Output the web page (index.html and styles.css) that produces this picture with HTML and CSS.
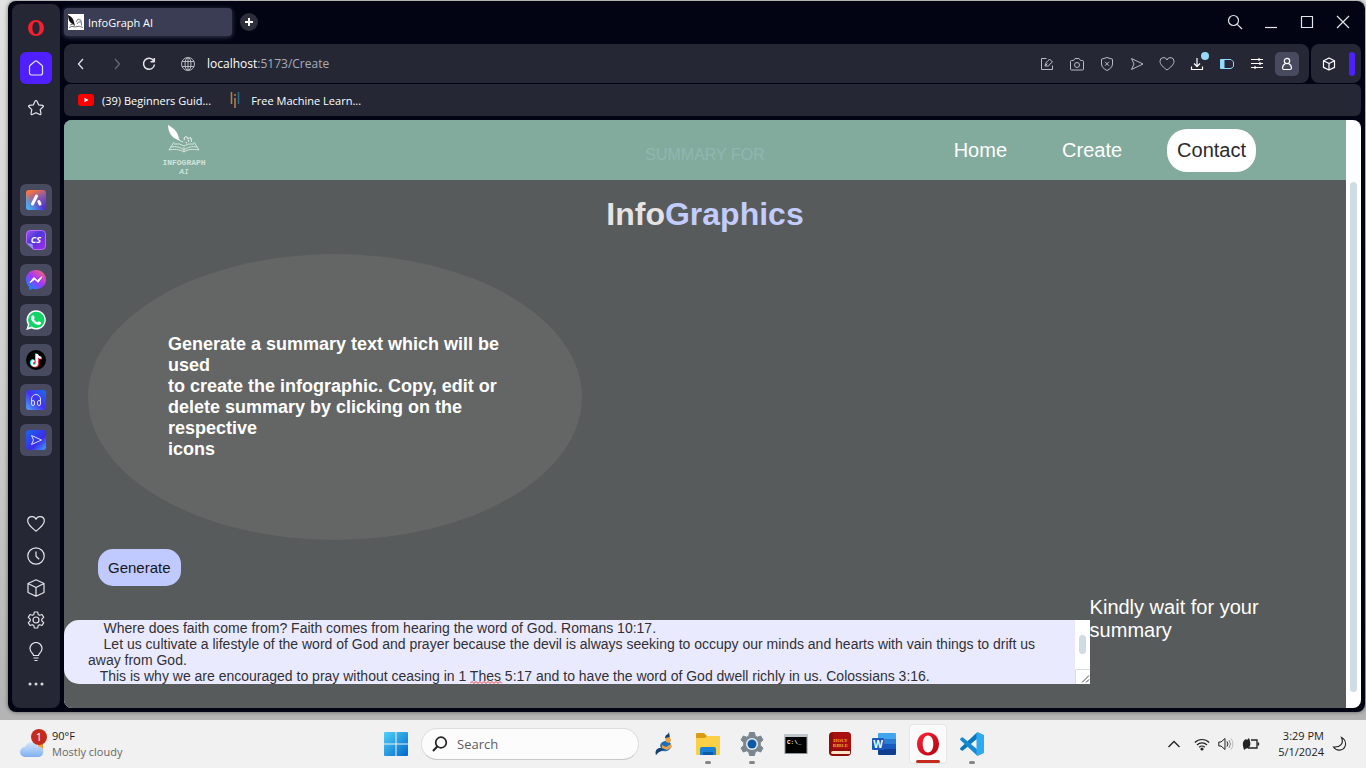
FILE: index.html
```
<!DOCTYPE html>
<html lang="en">
<head>
<meta charset="utf-8">
<meta name="viewport" content="width=device-width, initial-scale=1">
<title>InfoGraph AI</title>
<link rel="stylesheet" href="styles.css">
</head>
<body>
<div class="desktop">
  <div class="window">
    <nav class="sidebar" aria-label="Sidebar">
      <button class="side-btn" aria-label="Opera menu"><svg width="18" height="18" viewBox="0 0 18 18"><path fill="#fa1e2e" fill-rule="evenodd" d="M9 1a8 8 0 1 0 0 16A8 8 0 0 0 9 1zm0 1.800c2.200 0 3.600 2.800 3.600 6.200s-1.400 6.200-3.600 6.200S5.400 12.400 5.400 9 6.800 2.800 9 2.800z"/></svg></button>
      <button class="side-btn home" aria-label="Home"><svg class="line" width="18" height="18" viewBox="0 0 18 18"><path d="M2.500 7.500q0-.6.500-1L8 2.300q1-.8 2 0l5 4.200q.5.400.5 1V14a2 2 0 0 1-2 2h-9a2 2 0 0 1-2-2z"/></svg></button>
      <button class="side-btn" aria-label="Speed dial"><svg class="line" width="18" height="18" viewBox="0 0 18 18"><path d="M9 1.500q.7 0 1 .7l1.600 3.600 4 .5q1.400.4.500 1.500l-2.900 2.800.8 4q0 1.400-1.200.9L9 13.700l-3.800 1.800q-1.200.5-1.200-.9l.8-4L1.900 7.800q-.9-1.100.5-1.500l4-.5L8 2.200q.3-.7 1-.7z"/></svg></button>
      <div class="side-apps">
        <button class="side-btn app" aria-label="Aria"><svg width="20" height="20" viewBox="0 0 20 20"><defs><linearGradient id="ga" x1="0.3" y1="0" x2=".8" y2="1"><stop offset="0" stop-color="#ff7438"/><stop offset=".45" stop-color="#8a5aa8"/><stop offset="1" stop-color="#4c2bd8"/></linearGradient><linearGradient id="gb" x1="0" y1="1" x2=".5" y2=".5"><stop offset="0" stop-color="#3cc9ff"/><stop offset="1" stop-color="#3cc9ff" stop-opacity="0"/></linearGradient></defs><rect width="20" height="20" rx="3" fill="url(#ga)"/><rect width="20" height="20" rx="3" fill="url(#gb)"/><path d="M6.500 14 10.500 6M12.800 11.500l1.200 2.500" stroke="#fff" stroke-width="3" stroke-linecap="round" fill="none"/></svg></button>
        <button class="side-btn app" aria-label="ChatSonic"><svg width="20" height="20" viewBox="0 0 20 20"><defs><linearGradient id="gc" x1="0" y1="0" x2="1" y2="1"><stop offset="0" stop-color="#a353f4"/><stop offset=".4" stop-color="#4b38d8"/><stop offset="1" stop-color="#a42ce6"/></linearGradient></defs><path d="M4 .5h12a3.500 3.500 0 0 1 3.500 3.500v12a3.500 3.500 0 0 1-3.500 3.500H7.500L.5 13V4A3.500 3.500 0 0 1 4 .5z" fill="url(#gc)" stroke="#bc69f5"/><path d="M.5 13 7.500 19.500 6.500 14z" fill="#9b8cff"/><text x="10" y="13" text-anchor="middle" class="cs">CS</text></svg></button>
        <button class="side-btn app" aria-label="Messenger"><svg width="20" height="20" viewBox="0 0 20 20"><defs><linearGradient id="gd" x1=".1" y1="1" x2=".9" y2="0"><stop offset="0" stop-color="#0094ff"/><stop offset=".5" stop-color="#a034fb"/><stop offset="1" stop-color="#ff6670"/></linearGradient></defs><path d="M10 0C4.300 0 0 4.100 0 9.600c0 2.900 1.200 5.400 3.100 7.100L3.200 20l3.400-1.300c1 .3 2.200.5 3.400.5 5.700 0 10-4.100 10-9.600S15.700 0 10 0z" fill="url(#gd)"/><path d="m4 12.500 3.800-5 3.500 3L16 6.800l-3.800 5.500-3.500-3z" fill="#fff" stroke="#fff"/></svg></button>
        <button class="side-btn app" aria-label="WhatsApp"><svg width="20" height="20" viewBox="0 0 20 20"><path d="M10.200.2a9.600 9.600 0 0 0-8.300 14.500L.2 20l5.400-1.500A9.700 9.700 0 1 0 10.200.2z" fill="#fff"/><path d="M10.200 1.800a8.100 8.100 0 0 0-6.800 12.400l-1 3.400 3.400-1A8.100 8.100 0 1 0 10.200 1.800z" fill="#12d366"/><path d="M6.500 5.500c.6-.4 1.200-.1 1.400.4l.7 1.700c.2.600-.8 1.200-.6 1.700.7 1.300 1.900 2.400 3.300 2.900.5.100 1-1.200 1.500-1l2 1c.4.200.3 1.300-.2 1.900-1.200 1.400-3.800 1-6.100-.6-2.200-1.600-3.900-4.200-3.400-6.200.2-.9.700-1.300 1.400-1.800z" fill="#fff"/></svg></button>
        <button class="side-btn app" aria-label="TikTok"><svg width="20" height="20" viewBox="0 0 20 20"><circle cx="10" cy="10" r="10" fill="#020202"/><g fill="none" stroke-width="2"><path stroke="#25f4ee" d="M10 3.500v9a2.500 2.500 0 1 1-2.500-2.500M10.500 4.500q.8 2.800 4 3"/><path stroke="#fe2c55" d="M12 5v9a2.500 2.500 0 1 1-2.500-2.500M12 5.500q.8 2.800 4 3"/><path stroke="#fff" d="M11 4v9.200a2.500 2.500 0 1 1-2.500-2.500M11 4.500q.8 3 4.300 3.300"/></g></svg></button>
        <button class="side-btn app" aria-label="Player"><svg width="20" height="20" viewBox="0 0 20 20"><defs><linearGradient id="ge" x1="0" y1="1" x2="1" y2="0"><stop offset="0" stop-color="#50a8ff"/><stop offset=".5" stop-color="#4330f0"/><stop offset="1" stop-color="#1b6dee"/></linearGradient></defs><rect width="20" height="20" rx="3" fill="url(#ge)"/><g fill="none" stroke="#dadcff"><path d="M5.500 12V9a4.500 4.500 0 0 1 9 0v3"/><rect x="5.500" y="10.500" width="3" height="5" rx="1.500"/><rect x="11.500" y="10.500" width="3" height="5" rx="1.500"/></g></svg></button>
        <button class="side-btn app" aria-label="My Flow"><svg width="20" height="20" viewBox="0 0 20 20"><defs><linearGradient id="gf" x1="0" y1="0" x2="1" y2="1"><stop offset="0" stop-color="#1c65ef"/><stop offset=".6" stop-color="#3a2bea"/><stop offset="1" stop-color="#46a0ff"/></linearGradient></defs><rect width="20" height="20" rx="3" fill="url(#gf)"/><path d="M5.500 5.500 15.500 10l-10 4.500 2-4.500z" fill="none" stroke="#dadcff" stroke-linejoin="round"/></svg></button>
      </div>
      <div class="side-tools">
        <button class="side-btn" aria-label="Favourites"><svg class="line" width="18" height="18" viewBox="0 0 18 18"><path d="M9 16.200C5 13 .7 9.600.7 6A4.300 4.300 0 0 1 9 4.300 4.300 4.300 0 0 1 17.300 6c0 3.600-4.300 7-8.300 10.200z"/></svg></button>
        <button class="side-btn" aria-label="History"><svg class="line" width="18" height="18" viewBox="0 0 18 18"><circle cx="9" cy="9" r="8.200"/><path d="M9 4.500v4.800l3.200 3"/></svg></button>
        <button class="side-btn" aria-label="Extensions"><svg class="line" width="18" height="18" viewBox="0 0 18 18"><path d="m9 .8 8 3.700v9L9 17.200l-8-3.700v-9zM1 4.500l8 4 8-4M9 8.500v8.700"/></svg></button>
        <button class="side-btn" aria-label="Settings"><svg class="line" width="18" height="18" viewBox="0 0 18 18"><path d="M7.300 1h3.400l.5 2.500 1.400.8 2.400-.8 1.700 2.900-1.900 1.700v1.800l1.900 1.700-1.700 2.900-2.400-.8-1.400.8-.5 2.500H7.300l-.5-2.500-1.400-.8-2.400.8-1.700-2.900 1.900-1.700V8.100L1.300 6.400 3 3.500l2.400.8 1.400-.8z"/><circle cx="9" cy="9" r="3"/></svg></button>
        <button class="side-btn" aria-label="Tips"><svg class="line" width="18" height="20" viewBox="0 0 18 20"><path d="M6.500 13.500c0-2-3.500-3.200-3.500-7a6 6 0 0 1 12 0c0 3.800-3.500 5-3.500 7zM6.500 16h5M7.500 18.500h3"/></svg></button>
        <button class="side-btn" aria-label="More"><svg width="18" height="18" viewBox="0 0 18 18" fill="#d9dae0"><circle cx="3" cy="9" r="1.500"/><circle cx="9" cy="9" r="1.500"/><circle cx="15" cy="9" r="1.500"/></svg></button>
      </div>
    </nav>

    <div class="browser">
      <div class="tabs">
        <button class="tab"><svg width="16" height="16" viewBox="0 0 16 16"><rect width="16" height="16" fill="#fff"/><path d="M0 1q5 2 6 7l1 4-4-3Q0 6 0 1z" fill="#111"/><path d="M1 13.500q3-2 6-.5 4-2 8 .5M2 11q3-2 5 .500M13.500 11.500q0-4-1-6M8 8l2-3 2 1M9 10q1-3 4-2" stroke="#777" fill="none"/></svg>InfoGraph AI</button>
        <button class="new-tab" aria-label="New tab"><svg width="18" height="18" viewBox="0 0 18 18"><circle cx="9" cy="9" r="9" fill="#2c2e39"/><path d="M9 5v8M5 9h8" stroke="#fff" stroke-width="2"/></svg></button>
        <div class="window-controls">
          <button aria-label="Search tabs"><svg class="line" width="16" height="16" viewBox="0 0 16 16"><circle cx="6.500" cy="6.500" r="5"/><path d="m10.300 10.300 4.700 4.700"/></svg></button>
          <button aria-label="Minimize"><svg class="line" width="16" height="16" viewBox="0 0 16 16"><path d="M2 13.500h12"/></svg></button>
          <button aria-label="Maximize"><svg class="line" width="16" height="16" viewBox="0 0 16 16"><path d="M2.500 2.500h11v11h-11z"/></svg></button>
          <button aria-label="Close"><svg class="line" width="16" height="16" viewBox="0 0 16 16"><path d="m2 2 12 12M14 2 2 14"/></svg></button>
        </div>
      </div>

      <div class="toolbar">
        <div class="address">
          <button class="nav-btn" aria-label="Back"><svg class="line" width="16" height="16" viewBox="0 0 16 16"><path d="M10 3 5.500 8l4.500 5"/></svg></button>
          <button class="nav-btn dim" aria-label="Forward"><svg class="line" width="16" height="16" viewBox="0 0 16 16"><path d="m6 3 4.500 5L6 13"/></svg></button>
          <button class="nav-btn" aria-label="Reload"><svg class="line" width="16" height="16" viewBox="0 0 16 16"><path stroke-width="1.500" d="M12.800 5A5.500 5.500 0 1 0 13.500 8.500M13.300 2v3.800H9.500"/></svg></button>
          <svg class="line soft globe" width="16" height="16" viewBox="0 0 16 16"><circle cx="8" cy="8" r="6.500"/><ellipse cx="8" cy="8" rx="3" ry="6.500"/><path d="M2 5.500h12M2 10.500h12M8 1.500v13"/></svg>
          <span class="url"><span class="host">localhost</span>:5173/Create</span>
          <div class="actions">
            <button aria-label="Edit page"><svg class="line soft" width="16" height="16" viewBox="0 0 16 16"><path d="M7.500 2.500h-5v11h11V9.500M6 10l1-3.500 1.500-1L10.500 3l3 3L11 8l-1.500 2zM6 10l2.500-2.500"/></svg></button>
            <button aria-label="Snapshot"><svg class="line soft" width="16" height="16" viewBox="0 0 16 16"><path d="M4.500 4.500 6 2.500h4l1.500 2h2a1 1 0 0 1 1 1V13a1 1 0 0 1-1 1h-11a1 1 0 0 1-1-1V5.500a1 1 0 0 1 1-1z"/><circle cx="8" cy="9" r="2.500"/></svg></button>
            <button aria-label="Blocker"><svg class="line soft" width="16" height="16" viewBox="0 0 16 16"><path d="m8 1.500 5.500 1.700V8c0 3-2.500 5-5.500 6.500C5 13 2.500 11 2.500 8V3.200zM6 5.800l4 4M10 5.800l-4 4"/></svg></button>
            <button aria-label="Send"><svg class="line soft" width="16" height="16" viewBox="0 0 16 16"><path d="M2.500 2.500 14 8 2.500 13.500 5 8z"/></svg></button>
            <button aria-label="Add to favourites"><svg class="line soft" width="16" height="16" viewBox="0 0 16 16"><path d="M8 14C4.500 11.500 1 8.500 1 5.300A3.600 3.600 0 0 1 8 4a3.600 3.600 0 0 1 7 1.300C15 8.500 11.500 11.500 8 14z"/></svg></button>
            <button class="has-dot" aria-label="Downloads"><svg class="line bright" width="16" height="16" viewBox="0 0 16 16"><path d="M8 2v8.500M5 7.500l3 3 3-3M2.500 10.500v3h11v-3"/></svg></button>
            <button aria-label="Battery saver"><svg width="16" height="16" viewBox="0 0 16 16" fill="none" stroke="#94d8fc"><path d="M1.500 3.500h10.500l2.500 2.500v4.500L12 12.500H1.500z"/><path fill="#94d8fc" d="M2 4h3v8H2z"/></svg></button>
            <button aria-label="Easy setup"><svg class="line bright" width="16" height="16" viewBox="0 0 16 16"><path d="M2 3.500h12M2 7.500h12M2 11.500h12M10 2v3M6 10v3M11 6v3"/></svg></button>
            <button class="profile" aria-label="Profile"><svg class="line bright" width="16" height="16" viewBox="0 0 16 16"><circle cx="8" cy="5" r="2.700"/><path d="M6.500 7.500c-2 1-3 2.500-3 4.500q0 1.500 1.500 1.500h6q1.500 0 1.500-1.500c0-2-1-3.500-3-4.500"/></svg></button>
          </div>
        </div>
        <div class="extension">
          <button aria-label="Extensions"><svg class="line bright" width="16" height="16" viewBox="0 0 16 16"><path d="m8 2 5.500 2.800v6.600L8 14l-5.500-2.600V4.800zM2.500 4.800 8 7.500l5.500-2.700M8 7.500V14"/></svg></button>
          <span class="accent"></span>
        </div>
      </div>

      <div class="bookmarks">
        <a href="#" class="bookmark"><svg width="16" height="12" viewBox="0 0 16 12"><rect width="16" height="12" rx="3" fill="#f00"/><path d="m6.500 3.700 4 2.300-4 2.300z" fill="#fff"/></svg>(39) Beginners Guid...</a>
        <a href="#" class="bookmark"><svg width="16" height="16" viewBox="0 0 16 16" fill="none" stroke-width="1.500"><path stroke="#b98242" d="M4.500 0v12M8 6v10M8 2v2"/><path stroke="#2a6d8a" d="M11.500 0v12"/></svg>Free Machine Learn...</a>
      </div>

      <div class="viewport">
        <div class="page">
          <header class="site-header">
            <div class="logo" role="img" aria-label="InfoGraph AI">
              <svg width="34" height="30" viewBox="0 0 34 30" fill="none" stroke="#d5e7df"><path fill="#fff" stroke="none" d="M1 1c6 3 10 7 11 14l3 3-4-2C5 14 1 8 1 1z"/><path d="M7 18 2 26c5-1 10-1 15 2 4-3 9-3 15-2l-5-8M17 28v-5M4 23c5-1 9 0 13 3 4-3 8-4 13-3M7 20q6-1 10 2 4-3 10-2"/><path stroke-dasharray="1 2" stroke-width="2" d="M15 18l4-5 6 3M19 19l5-5M17 14h8M21 17h6"/></svg>
              <span class="logo-name">INFOGRAPH</span>
              <span class="logo-sub">AI</span>
            </div>
            <p class="summary-for">SUMMARY FOR</p>
            <nav class="site-nav">
              <a href="#">Home</a>
              <a href="#">Create</a>
              <a href="#" class="contact">Contact</a>
            </nav>
          </header>
          <main class="content">
            <h1 class="title">Info<span>Graphics</span></h1>
            <h2 class="intro">Generate a summary text which will be used<br>to create the infographic. Copy, edit or delete summary by clicking on the respective<br>icons</h2>
            <button class="generate">Generate</button>
            <div class="summary-row">
              <div class="editor">
                <textarea aria-label="Summary text" spellcheck="false">    Where does faith come from? Faith comes from hearing the word of God. Romans 10:17.
    Let us cultivate a lifestyle of the word of God and prayer because the devil is always seeking to occupy our minds and hearts with vain things to drift us away from God.
   This is why we are encouraged to pray without ceasing in 1 Thes 5:17 and to have the word of God dwell richly in us. Colossians 3:16.</textarea>
                <svg class="squiggle" width="32" height="3" viewBox="0 0 32 3"><path d="M0 2.500 2 .5l2 2 2-2 2 2 2-2 2 2 2-2 2 2 2-2 2 2 2-2 2 2 2-2 2 2 2-2 2 2" fill="none" stroke="#f03a3a"/></svg>
                <div class="editor-track">
                  <span class="editor-thumb"></span>
                  <svg class="grip" width="15" height="15" viewBox="0 0 15 15"><path d="M.5 15V.5H15" fill="none" stroke="#dcdcdc"/><path d="m7 13.500 7-7M11 13.500l3-3" stroke="#444" fill="none"/></svg>
                </div>
              </div>
              <p class="wait">Kindly wait for your summary</p>
            </div>
          </main>
        </div>
        <div class="scroll-track"><span class="scroll-thumb"></span></div>
      </div>
    </div>
  </div>

  <footer class="taskbar">
    <button class="weather">
      <svg width="28" height="30" viewBox="0 0 28 30"><defs><linearGradient id="gw" x1="0" y1="0" x2="0" y2="1"><stop offset="0" stop-color="#d3e5ff"/><stop offset="1" stop-color="#7fb0f0"/></linearGradient></defs><path fill="#f39a30" d="M18 15h5v5h-5z"/><path d="M5 28a5 5 0 0 1 0-10 7 7 0 0 1 13-.5A5.300 5.300 0 0 1 19 28z" fill="url(#gw)"/><circle cx="19" cy="8" r="8" fill="#c42b1c"/><text x="19" y="12" text-anchor="middle" class="badge">1</text></svg>
      <span class="weather-text"><span>90°F</span><span class="muted">Mostly cloudy</span></span>
    </button>
    <div class="dock">
      <button class="task" aria-label="Start"><svg width="24" height="24" viewBox="0 0 24 24"><defs><linearGradient id="gs" x1="0" y1="0" x2="1" y2="1"><stop offset="0" stop-color="#4fd1fa"/><stop offset="1" stop-color="#0067c8"/></linearGradient></defs><path fill="url(#gs)" d="M1 0h10.500v11.500H0V1a1 1 0 0 1 1-1zM12.500 0H23a1 1 0 0 1 1 1v10.500H12.500zM0 12.500h11.500V24H1a1 1 0 0 1-1-1zM12.500 12.500H24V23a1 1 0 0 1-1 1H12.500z"/></svg></button>
      <label class="search"><svg width="16" height="16" viewBox="0 0 16 16" fill="none" stroke="#222" stroke-width="1.700"><circle cx="9" cy="6.500" r="5.300"/><path stroke-width="2" d="M5.300 10.500 1 15"/></svg><input type="text" placeholder="Search" aria-label="Search"></label>
      <button class="task" aria-label="Genie"><svg width="24" height="24" viewBox="0 0 24 24"><path fill="#1f6fb4" d="M4 23c-1-5 1-7 5-7-2-3 0-6 4-7 4 0 7 2 6 6-1 3-4 5-8 4-3 0-5 1-7 4z"/><path fill="#173f70" d="M4 23c-1-5 1-7 5-7l4 2c-4 0-7 2-9 5zM13 6q0-3 3-4l1-2 1 6z"/><path fill="#e9a14a" d="m13 6 5-1 1 4-2 2-3-1zM10 13l4 2 5-3 1 3-5 3-5-2z"/></svg></button>
      <button class="task running" aria-label="File Explorer"><svg width="24" height="24" viewBox="0 0 24 24"><path fill="#d99b12" d="M0 2a1 1 0 0 1 1-1h7l3 3h12v6H0z"/><path fill="#fbcf46" d="M0 6h9l2-2h12a1 1 0 0 1 1 1v17a1 1 0 0 1-1 1H1a1 1 0 0 1-1-1z"/><path fill="#1881d6" d="M4 23v-6a2 2 0 0 1 2-2h12a2 2 0 0 1 2 2v6z"/><path fill="#0b5ca7" d="M7 20h10v3H7z"/></svg></button>
      <button class="task running" aria-label="Settings"><svg width="24" height="24" viewBox="0 0 24 24"><path fill="#7c868f" stroke="#7c868f" stroke-linejoin="round" d="M9.500.5h5l.7 3.500 2.100 1.200 3.400-1.200 2.300 4-2.700 2.400v3.200l2.700 2.400-2.300 4-3.400-1.200-2.100 1.200-.7 3.500h-5L8.800 20l-2.100-1.200L3.300 20 1 16l2.700-2.400v-3.200L1 8l2.300-4 3.400 1.200L8.800 4z"/><circle cx="12" cy="12" r="6" fill="#e9eef2"/><circle cx="12" cy="12" r="4.500" fill="#0c59a5"/></svg></button>
      <button class="task" aria-label="Command Prompt"><svg width="24" height="24" viewBox="0 0 24 24"><rect x="1" y="2.500" width="22" height="19" fill="#000" stroke="#8c9298"/><path fill="#bfc5ca" d="M1 2h22v3H1z"/><text x="3" y="12" class="cmd">C:\_</text></svg></button>
      <button class="task" aria-label="Holy Bible"><svg width="24" height="24" viewBox="0 0 24 24"><rect x="1" width="22" height="24" rx="4" fill="#8f0c0c"/><path fill="#b91310" d="M5 0h14a4 4 0 0 1 4 4v13H5z" opacity=".6"/><path fill="#f6e6c5" d="M3 21q0-2 2-2h17v3H5q-2 0-2-1z"/><text x="12.500" y="10" text-anchor="middle" class="bible">HOLY</text><text x="12.500" y="15" text-anchor="middle" class="bible">BIBLE</text></svg></button>
      <button class="task" aria-label="Word"><svg width="24" height="24" viewBox="0 0 24 24"><path fill="#41a5ee" d="M7 1h16a1 1 0 0 1 1 1v5H6V2a1 1 0 0 1 1-1z"/><path fill="#2b7cd3" d="M6 7h18v5H6z"/><path fill="#185abd" d="M6 12h18v5H6z"/><path fill="#103f91" d="M6 17h18v5a1 1 0 0 1-1 1H7a1 1 0 0 1-1-1z"/><rect y="6" width="12" height="12" rx="1" fill="#185abd"/><text x="6" y="15.500" text-anchor="middle" class="word">W</text></svg></button>
      <button class="task active" aria-label="Opera"><svg width="24" height="24" viewBox="0 0 24 24"><defs><linearGradient id="go" x1="0" y1="0" x2="1" y2="1"><stop offset="0" stop-color="#ff2637"/><stop offset="1" stop-color="#b0000d"/></linearGradient></defs><path fill="url(#go)" fill-rule="evenodd" d="M12 .5C5.500.5 1 5.500 1 12s4.500 11.500 11 11.500S23 18.500 23 12 18.500.5 12 .5zm0 3c3.500 0 5.300 3.800 5.300 8.500s-1.800 8.500-5.300 8.500S6.700 16.700 6.700 12 8.500 3.500 12 3.500z"/></svg></button>
      <button class="task running" aria-label="Visual Studio Code"><svg width="24" height="24" viewBox="0 0 24 24"><path fill="#0878be" d="M17.500 0 18 6 3 18.500q-.7.500-1.300 0L.3 17.200q-.5-.6 0-1.200z"/><path fill="#1689d3" d="M17.500 24 18 18 3 5.500q-.7-.5-1.300 0L.3 6.800q-.5.600 0 1.200z"/><path fill="#2fa9f2" d="M17.500 0 24 3v18l-6.500 3-1-1.500V1.500z"/></svg></button>
    </div>
    <div class="tray">
      <button class="tray-btn chevron" aria-label="Show hidden icons"><svg width="16" height="16" viewBox="0 0 16 16"><path d="m2.500 11 5.500-5.500 5.500 5.500" fill="none" stroke="#222" stroke-width="1.300"/></svg></button>
      <button class="tray-btn" aria-label="Network, volume and battery">
        <svg width="16" height="16" viewBox="0 0 16 16" fill="none" stroke="#222" stroke-width="1.200"><path d="M.8 6.500a10.200 10.200 0 0 1 14.400 0M3 9a7 7 0 0 1 10 0M5.200 11.300a4 4 0 0 1 5.600 0"/><circle cx="8" cy="13" r="1" fill="#222"/></svg>
        <svg width="16" height="16" viewBox="0 0 16 16" fill="none" stroke="#222"><path d="M.8 6H3l4-3.500v11L3 10H.8zM9 5.500q1.800 2.500 0 5"/><path d="M11 4q3 4 0 8" stroke="#888"/><path d="M13 2.500q4 5.500 0 11" stroke="#bbb"/></svg>
        <svg width="18" height="16" viewBox="0 0 18 16" fill="none" stroke="#222" stroke-width="1.300"><path d="M9 4h6v8H6M16.500 6.500v3"/><path fill="#222" stroke="none" d="M1 10Q0 5 4 3l1 1 2-2q2 5 1 8-2 3-4 2.500L2 14z"/></svg>
      </button>
      <button class="clock"><span>3:29 PM</span><span>5/1/2024</span></button>
      <button class="tray-btn" aria-label="Notifications"><svg width="16" height="16" viewBox="0 0 16 16"><path d="M9.500 1.500c2.500 6-1 10-8 9.500 3 4.500 9.500 4 11.500-.5 1.500-4-.5-7.500-3.500-9z" fill="none" stroke="#222" stroke-width="1.100"/></svg></button>
    </div>
  </footer>
</div>
</body>
</html>
```
FILE: styles.css
```
* { box-sizing: border-box; }

body {
  margin: 0;
  font-family: "Open Sans", "Noto Sans", sans-serif;
  font-size: 12px;
}

button {
  margin: 0;
  padding: 0;
  border: 0;
  background: none;
  color: inherit;
  font: inherit;
  display: flex;
  align-items: center;
  justify-content: center;
}

a { color: inherit; text-decoration: none; }

svg { flex: none; display: block; }

.line {
  fill: none;
  stroke: #e4e5ea;
  stroke-width: 1.2;
  stroke-linejoin: round;
}
.line.soft { stroke: #b9bbc2; stroke-width: 1; }
.line.bright { stroke: #fff; }

.desktop {
  min-height: 100vh;
  display: flex;
  flex-direction: column;
  background: linear-gradient(#e2e2e2, #cfcfcf 50%, #b0b0b0);
}

/* Browser window */
.window {
  flex: 1;
  display: flex;
  gap: 4px;
  margin: 1px 1px 8px 8px;
  padding: 3px 4px 4px;
  background: #020414;
  border-radius: 8px;
  box-shadow: 0 0 4px rgba(0, 0, 0, 0.5);
}

.sidebar {
  width: 48px;
  flex: none;
  display: flex;
  flex-direction: column;
  align-items: center;
  gap: 8px;
  padding: 8px 0;
  background: #252834;
  border-radius: 8px;
}
.side-btn { width: 32px; height: 32px; border-radius: 6px; }
.side-btn.home { background: #4f1fff; }
.side-btn.app { background: #484a60; }
.side-apps { display: grid; gap: 8px; margin-top: 52px; }
.side-tools { display: grid; margin-top: auto; }
.cs { font: italic bold 9px "Open Sans", sans-serif; fill: #fff; }

.browser {
  flex: 1;
  min-width: 0;
  display: flex;
  flex-direction: column;
}

.tabs {
  display: flex;
  align-items: center;
  height: 36px;
  margin-bottom: 4px;
  color: #fff;
}
.tab {
  width: 168px;
  height: 28px;
  justify-content: flex-start;
  gap: 4px;
  padding: 0 4px;
  background: #3b3d54;
  border-radius: 4px;
  box-shadow: 0 1px 5px #3b3d54;
  font-size: 11px;
}
.new-tab { margin-left: 8px; }
.window-controls { display: flex; margin-left: auto; }
.window-controls button { width: 36px; height: 36px; }

.toolbar { display: flex; gap: 2px; height: 39px; }
.address, .extension {
  display: flex;
  align-items: center;
  background: #252834;
  border-radius: 8px;
}
.address { flex: 1; min-width: 0; padding: 0 7px 0 1px; }
.nav-btn { width: 32px; height: 32px; }
.nav-btn.dim { margin-left: 4px; opacity: 0.35; }
.globe { margin: 0 11px 0 15px; }
.url { color: #a9acb8; }
.host { color: #fff; }
.actions { display: flex; align-items: center; margin-left: auto; }
.actions button { width: 24px; height: 24px; margin: 0 3px; }
.actions .profile { background: #484a60; border-radius: 5px; }
.has-dot { position: relative; }
.has-dot::after {
  content: "";
  position: absolute;
  top: 0;
  right: 0;
  width: 8px;
  height: 8px;
  border-radius: 50%;
  background: #94d8fc;
}
.extension { width: 50px; justify-content: space-between; padding: 0 6px 0 10px; }
.accent { width: 6px; height: 24px; border-radius: 3px; background: #4f1fff; }

.bookmarks {
  display: flex;
  align-items: center;
  gap: 16px;
  height: 32px;
  margin: 1px 0 4px;
  padding: 0 14px;
  background: #252834;
  border-radius: 6px;
  color: #fff;
  font-size: 11px;
}
.bookmark { display: flex; align-items: center; gap: 8px; }

/* Web page */
.viewport {
  flex: 1;
  display: flex;
  border-radius: 8px;
  overflow: hidden;
  background: #fff;
  font-family: "Liberation Sans", Arial, sans-serif;
}
.page { flex: 1; min-width: 0; background: #575b5b; }
.scroll-track { width: 15px; display: flex; padding: 62px 4px 16px; }
.scroll-thumb { flex: 1; border-radius: 4px; background: #d0dce4; }

.site-header {
  display: grid;
  grid-template-columns: 1fr auto 1fr;
  align-items: center;
  height: 60px;
  padding: 0 90px;
  background: #83ab9d;
  color: #fff;
}
.logo {
  width: 48px;
  margin-left: 6px;
  display: flex;
  flex-direction: column;
  align-items: center;
}
.logo-name { margin-top: 4px; font: bold 8px/9px "Liberation Mono", monospace; color: #d0e2da; }
.logo-sub { font: italic 8px/10px "Liberation Mono", monospace; color: #dfece6; }
.summary-for { margin: 10px 0 0; font-size: 16px; line-height: 18px; color: #8fb7b0; }
.site-nav {
  display: flex;
  justify-content: flex-end;
  gap: 35px;
  font-size: 20px;
  line-height: 23px;
}
.site-nav a { padding: 10px; }
.site-nav .contact { background: #fff; color: #2a2a2e; border-radius: 20px; }

.content { padding-top: 16px; }
.title {
  margin: 0;
  text-align: center;
  font-size: 32px;
  line-height: 36px;
  color: #e8e3e3;
}
.title span { color: #c2ccff; }
.intro {
  width: 494px;
  max-width: 100%;
  margin: 22px 0 9px 24px;
  padding: 80px;
  border-radius: 50%;
  background: #636664;
  color: #fff;
  font-size: 18px;
  line-height: 21px;
}
.generate {
  margin-left: 34px;
  padding: 10px;
  border-radius: 15px;
  background: #c0caff;
  color: #16161d;
  font-size: 15px;
  line-height: 17px;
}
.summary-row {
  display: flex;
  align-items: flex-start;
  padding: 10px 0 24px;
}
.editor {
  position: relative;
  width: 80%;
  height: 64px;
  margin-top: 24px;
  display: flex;
}
.editor textarea {
  flex: 1;
  min-width: 0;
  margin: 0;
  padding: 0 24px;
  border: 0;
  border-radius: 15px 0 0 15px;
  background: #eaeaff;
  color: #303036;
  font: 14px/16px "Liberation Sans", Arial, sans-serif;
  resize: none;
  overflow: hidden;
}
.squiggle { position: absolute; left: 406px; bottom: 0; }
.editor-track {
  width: 15px;
  display: flex;
  flex-direction: column;
  justify-content: space-between;
  align-items: center;
  padding-top: 15px;
  background: #fff;
}
.editor-thumb { width: 7px; height: 19px; border-radius: 4px; background: #d0dce4; }
.wait {
  flex: 1;
  margin: 0;
  padding-right: 24px;
  color: #fff;
  font-size: 20px;
  line-height: 23px;
}

/* Taskbar */
.taskbar {
  display: grid;
  grid-template-columns: 1fr auto 1fr;
  align-items: center;
  height: 48px;
  padding: 0 18px 0 20px;
  background: #f1f1f1;
  color: #1c1c1c;
  font-size: 11px;
  line-height: 16px;
}
.weather { justify-self: start; gap: 4px; }
.weather-text { display: grid; text-align: left; }
.muted { color: #666; }
.badge { font: 11px "Open Sans", sans-serif; fill: #fff; }
.dock { display: flex; align-items: center; }
.task { position: relative; width: 44px; height: 40px; }
.task.running::after,
.task.active::after {
  content: "";
  position: absolute;
  bottom: 0;
  left: 19px;
  width: 6px;
  height: 3px;
  border-radius: 2px;
  background: #868686;
}
.task.active {
  border: 1px solid #e6e6e6;
  border-radius: 4px;
  background: #fafafa;
  width: 38px;
  margin: 0 3px;
}
.task.active::after { left: 6px; width: 24px; background: #c42b1c; }
.search {
  display: flex;
  align-items: center;
  gap: 9px;
  width: 218px;
  height: 32px;
  margin: 0 3px;
  padding: 0 10px;
  border: 1px solid #dedede;
  border-bottom-color: #c8c8c8;
  border-radius: 16px;
  background: #fcfcfc;
}
.search input {
  flex: 1;
  min-width: 0;
  padding: 0;
  border: 0;
  background: none;
  font: 13px "Open Sans", sans-serif;
}
.search input::placeholder { color: #5c5c5c; }
.cmd { font: bold 6px "Liberation Mono", monospace; fill: #fff; }
.bible { font: bold 5px "Liberation Serif", serif; fill: #f0a830; }
.word { font: bold 10px "Open Sans", sans-serif; fill: #fff; }
.tray { justify-self: end; display: flex; align-items: center; }
.tray-btn { gap: 8px; }
.chevron { margin-right: 12px; }
.clock { display: grid; text-align: right; margin: 0 8px 0 18px; }
```
